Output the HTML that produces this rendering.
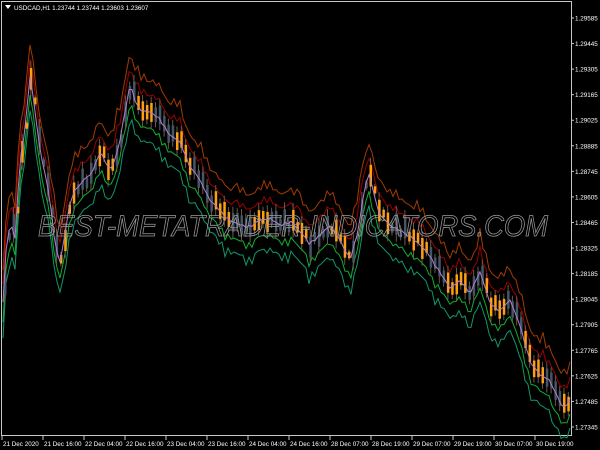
<!DOCTYPE html>
<html><head><meta charset="utf-8"><style>
html,body{margin:0;padding:0;background:#000;width:600px;height:450px;overflow:hidden}
svg{display:block}
text{font-family:"Liberation Sans",sans-serif;font-size:6.3px;fill:#fff}
</style></head><body>
<svg id="s" width="600" height="450" viewBox="0 0 600 450">
<rect x="0" y="0" width="600" height="450" fill="#000"/>
<rect x="1.5" y="1.5" width="570" height="434" fill="none" stroke="#c8c8c8" stroke-width="1"/>
<g id="chart"></g>
<text x="38" y="236" textLength="510" lengthAdjust="spacingAndGlyphs" style="font-size:30px;font-style:italic;fill:none;stroke:#9a9a9a;stroke-width:0.8">BEST-METATRADER-INDICATORS.COM</text>
<polygon points="5,5 11,5 8,9" fill="#fff"/>
<text x="14" y="10">USDCAD,H1  1.23744 1.23744 1.23603 1.23607</text>
<g id="axis"></g>
</svg>
<script>
var pts=[[3,300],[6,250],[10,220],[15,238],[20,160],[25,130],[30,75],[35,110],[40,150],[45,172],[50,200],[55,245],[60,262],[65,232],[70,200],[75,190],[80,185],[85,178],[90,175],[95,165],[100,150],[105,160],[110,170],[115,160],[120,140],[125,110],[130,82],[135,100],[140,110],[150,112],[160,118],[170,135],[180,142],[190,165],[200,180],[210,200],[220,210],[230,220],[240,225],[250,225],[260,220],[270,218],[280,225],[290,220],[300,232],[310,242],[320,235],[330,225],[340,240],[350,258],[358,232],[365,185],[370,172],[375,198],[380,215],[390,225],[400,230],[410,235],[420,245],[430,255],[440,272],[450,288],[460,280],[470,292],[480,272],[490,302],[500,310],[510,300],[520,325],[530,360],[540,375],[550,380],[555,390],[560,402],[565,408],[570,398]];
function at(x){for(var i=1;i<pts.length;i++){if(x<=pts[i][0]){var a=pts[i-1],b=pts[i];var t=(x-a[0])/(b[0]-a[0]);return a[1]+(b[1]-a[1])*t;}}return pts[pts.length-1][1];}
function nz(x){return Math.sin(x*0.9)*5+Math.sin(x*2.3)*4+Math.sin(x*0.31)*3;}
var g=document.getElementById('chart'),ns='http://www.w3.org/2000/svg';
function line(off,col,k){var d='';for(var x=3;x<=570;x+=3){var n=nz(x);var y=at(x)+off+n*k+(off<0?-Math.max(0,n)*k:Math.max(0,-n)*k);d+=(x==3?'M':'L')+x+','+y.toFixed(1);}var p=document.createElementNS(ns,'path');p.setAttribute('d',d);p.setAttribute('fill','none');p.setAttribute('stroke',col);p.setAttribute('stroke-width','1');g.appendChild(p);}
line(-30,'#a33a00',1.2);line(-16,'#9a0000',0.9);line(16,'#10b030',0.9);line(30,'#109868',1.2);
for(var x=4;x<570;x+=4.3){var y=at(x)+nz(x)*0.5;var up=Math.sin(x*1.3)>0;var h=5+Math.abs(Math.sin(x*0.37))*13;
var w=document.createElementNS(ns,'line');w.setAttribute('x1',x+1);w.setAttribute('x2',x+1);w.setAttribute('y1',y-h);w.setAttribute('y2',y+h);w.setAttribute('stroke','#6a5a48');g.appendChild(w);
var r=document.createElementNS(ns,'rect');r.setAttribute('x',x);r.setAttribute('y',y-h*0.6);r.setAttribute('width',2.5);r.setAttribute('height',h*1.2);r.setAttribute('fill',up?'#ff9f10':'#445566');g.appendChild(r);}
line(0,'#b080c8',0.3);
var a=document.getElementById('axis');var pr=['1.29585','1.29445','1.29305','1.29165','1.29025','1.28885','1.28745','1.28605','1.28465','1.28325','1.28185','1.28045','1.27905','1.27765','1.27625','1.27485','1.27345'];
for(var i=0;i<pr.length;i++){var yy=18+i*25.56;var t=document.createElementNS(ns,'text');t.setAttribute('x',575);t.setAttribute('y',yy+2.5);t.textContent=pr[i];a.appendChild(t);var tk=document.createElementNS(ns,'line');tk.setAttribute('x1',571);tk.setAttribute('x2',574);tk.setAttribute('y1',yy);tk.setAttribute('y2',yy);tk.setAttribute('stroke','#c8c8c8');a.appendChild(tk);}
var dl=['21 Dec 2020','21 Dec 16:00','22 Dec 04:00','22 Dec 16:00','23 Dec 04:00','23 Dec 16:00','24 Dec 04:00','24 Dec 16:00','28 Dec 07:00','28 Dec 19:00','29 Dec 07:00','29 Dec 19:00','30 Dec 07:00','30 Dec 19:00'];
for(var i=0;i<dl.length;i++){var xx=2+i*41;var t=document.createElementNS(ns,'text');t.setAttribute('x',xx+1);t.setAttribute('y',446);t.textContent=dl[i];a.appendChild(t);var tk=document.createElementNS(ns,'line');tk.setAttribute('x1',xx);tk.setAttribute('x2',xx);tk.setAttribute('y1',436);tk.setAttribute('y2',440);tk.setAttribute('stroke','#c8c8c8');a.appendChild(tk);}
</script>
</body></html>
